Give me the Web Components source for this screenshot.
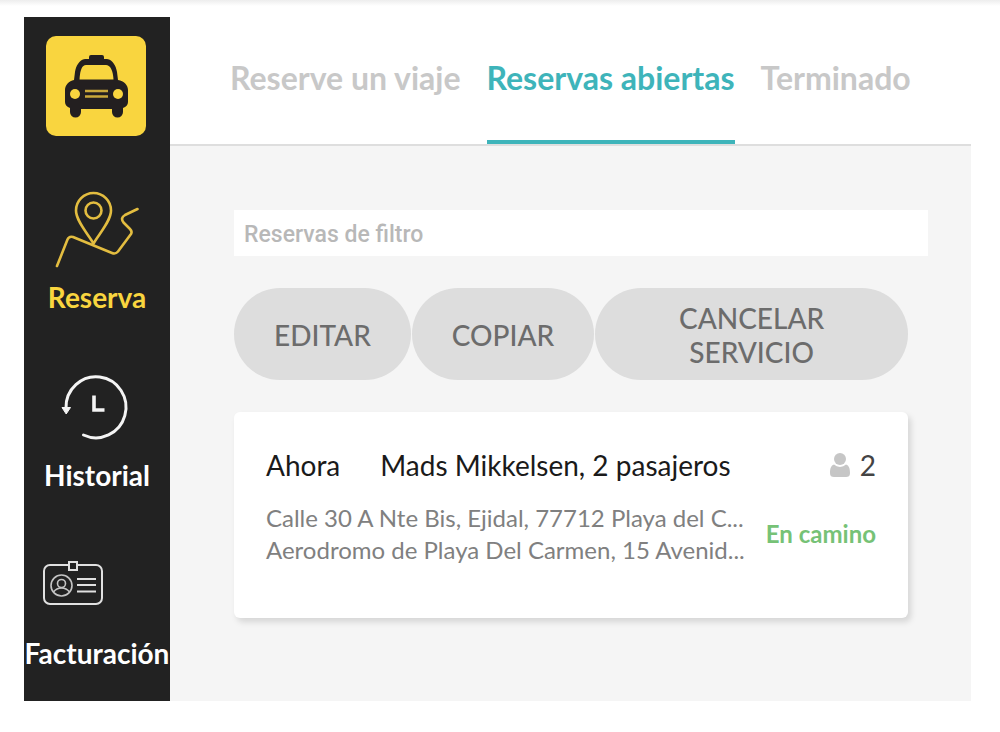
<!DOCTYPE html>
<html lang="es">
<head>
<meta charset="utf-8">
<title>Reservas abiertas</title>
<style>
  body { margin: 0; background: #fff; font-family: Lato, "Open Sans", sans-serif; color: #222; }
</style>
</head>
<body>
<taxi-app>
  <side-bar slot="side">
    <side-item href="#reserva" active>
      <svg slot="icon" viewBox="0 0 146 100" fill="none" stroke="#e3bd40" stroke-width="2.6" stroke-linecap="round" stroke-linejoin="round">
        <path d="M69.500 62.500C64 53 52 40 52 29.500a17.500 17.500 0 0 1 35 0C87 40 75 53 69.500 62.500Z"/>
        <circle cx="69.500" cy="29.500" r="8"/>
        <path d="M33 85L43.500 58.500Q45 55 49 56L88 72Q91.500 73.500 94 70.500L107 53Q108.500 50.500 106 48L99.500 41.500Q96 37 101 34L113.500 28"/>
      </svg>
      Reserva
    </side-item>
    <side-item href="#historial">
      <svg slot="icon" viewBox="0 0 146 100" fill="none" stroke="#f4f4f4" stroke-width="3">
        <path d="M42 49a30 30.500 0 1 1 17.500 27" stroke-linecap="round"/>
        <path d="M38 48.500h8.500l-4.300 6.500z" fill="#f4f4f4" stroke-width="1"/>
        <path d="M70 36.500v14.500h10.500" stroke-width="3.600"/>
      </svg>
      Historial
    </side-item>
    <side-item href="#facturacion">
      <svg slot="icon" viewBox="0 0 146 100" fill="none" stroke="#e0e0e0" stroke-width="2">
        <path d="M44 28H26a6 6 0 0 0-6 6v27a6 6 0 0 0 6 6h46a6 6 0 0 0 6-6V34a6 6 0 0 0-6-6H54"/>
        <rect x="45" y="25" width="8" height="8"/>
        <g stroke-width="1.600" stroke="#c4c4c4"><circle cx="37.500" cy="48.500" r="10.500"/><circle cx="37.500" cy="46.500" r="4"/><path d="M29.500 55q3-4 8-4t8 4"/></g>
        <path d="M53 42h19M53 48h19M53 54.500h19"/>
      </svg>
      Facturación
    </side-item>
  </side-bar>
  <tab-bar slot="tabs">
    <a href="#viaje">Reserve un viaje</a>
    <a href="#abiertas" aria-current="page">Reservas abiertas</a>
    <a href="#terminado">Terminado</a>
  </tab-bar>
  <booking-filter placeholder="Reservas de filtro"></booking-filter>
  <booking-actions>
    <pill-button>EDITAR</pill-button>
    <pill-button>COPIAR</pill-button>
    <pill-button wide>CANCELAR SERVICIO</pill-button>
  </booking-actions>
  <booking-card>
    <span slot="time">Ahora</span>
    <span slot="name">Mads Mikkelsen, 2 pasajeros</span>
    <span slot="count">2</span>
    <span slot="from">Calle 30 A Nte Bis, Ejidal, 77712 Playa del C...</span>
    <span slot="to">Aerodromo de Playa Del Carmen, 15 Avenid...</span>
    <span slot="status">En camino</span>
  </booking-card>
</taxi-app>

<script>
const define = (name, html, setup) => customElements.define(name, class extends HTMLElement {
  constructor() {
    super();
    this.attachShadow({ mode: "open" }).innerHTML = html;
  }
  connectedCallback() { if (setup) setup(this, this.shadowRoot); }
});

define("taxi-app", `
  <style>
    :host { display: block; }
    .edge { height: 6px; background: linear-gradient(#ededed, #fff); }
    .frame { display: grid; grid-template-columns: 146px minmax(0, 1fr); margin: 11px 29px 30px 24px; }
    .page { display: flex; flex-direction: column; background: #f5f5f5; }
    main { display: flex; flex-direction: column; gap: 32px; padding: 64px 43px 64px 64px; }
  </style>
  <div class="edge"></div>
  <div class="frame">
    <slot name="side"></slot>
    <div class="page">
      <slot name="tabs"></slot>
      <main><slot></slot></main>
    </div>
  </div>`);

define("side-bar", `
  <style>
    :host { display: block; background: #222; }
    .logo { display: block; width: 100px; height: 100px; margin-left: 22px; }
    .logo svg { display: block; }
    aside { padding: 19px 0 32px; }
    nav { display: flex; flex-direction: column; gap: 46px; margin-top: 45px; }
  </style>
  <aside>
    <a class="logo" href="#inicio" aria-label="Inicio">
      <svg width="100" height="100" viewBox="0 0 100 100">
        <rect width="100" height="100" rx="10" fill="#f9d53f"/>
        <path d="M45 19h11q2 0 2 2v2h3c6 1 9 7 10 13l1 8c6 1 10 5 10 10v12c0 3-2 5-5 6v4a5.500 5.500 0 0 1-11 0v-3H35v3a5.500 5.500 0 0 1-11 0v-4c-3-1-5-3-5-6V54c0-5 4-9 9-10l1-8c1-6 4-12 10-13h4v-2q0-2 2-2z" fill="#231f20"/>
        <path d="M40 29h20c4 0 7 5 7.500 14.500h-34C34 34 36 29 40 29z" fill="#f9d53f"/>
        <circle cx="29" cy="58" r="5" fill="#f9d53f"/><circle cx="72" cy="58" r="5" fill="#f9d53f"/>
        <path d="M39 55h23M39 60.500h23" stroke="#c9a83a" stroke-width="2.500"/>
      </svg>
    </a>
    <nav><slot></slot></nav>
  </aside>`);

define("side-item", `
  <style>
    :host { display: block; color: #fff; }
    :host([active]) { color: #f9d53f; }
    a { display: flex; flex-direction: column; align-items: center; color: inherit; text-decoration: none;
        font-size: 28px; line-height: 32px; font-weight: 700; white-space: nowrap; }
    ::slotted(svg) { display: block; width: 146px; height: 100px; }
  </style>
  <a><slot name="icon"></slot><span><slot></slot></span></a>`,
  (el, root) => root.querySelector("a").href = el.getAttribute("href"));

define("tab-bar", `
  <style>
    :host { display: block; background: #fff; border-bottom: 2px solid #dedede; }
    nav { display: flex; gap: 26px; padding-left: 60px; }
    ::slotted(a) { padding: 43px 0 44px; border-bottom: 4px solid transparent; color: #c8c8c8;
      font-size: 32px; line-height: 36px; font-weight: 700; text-decoration: none; white-space: nowrap; }
    ::slotted(a[aria-current]) { color: #3eb4ba; border-color: #3eb4ba; }
  </style>
  <nav><slot></slot></nav>`);

define("booking-filter", `
  <style>
    :host { display: block; }
    input { display: block; box-sizing: border-box; width: 100%; height: 46px; padding: 2px 10px 0; border: 0; border-radius: 0;
      background: #fff; font: 500 23px Roboto, sans-serif; color: #444; outline: 0; }
    input::placeholder { color: #b8b8b8; opacity: 1; }
  </style>
  <input type="text">`,
  (el, root) => {
    const input = root.querySelector("input");
    input.placeholder = el.getAttribute("placeholder");
    input.setAttribute("aria-label", input.placeholder);
  });

define("booking-actions", `
  <style>
    :host { display: flex; gap: 1px; margin-right: 20px; }
  </style>
  <slot></slot>`);

define("pill-button", `
  <style>
    :host { display: flex; flex: none; }
    :host([wide]) { flex: 1 1 0; min-width: 0; }
    button { flex: 1; min-height: 92px; padding: 13px 40px 11px; border: 0; border-radius: 46px; background: #ddd; color: #6c6c6c;
      font: 500 28px/34px Lato, sans-serif; }
  </style>
  <button type="button"><slot></slot></button>`);

define("booking-card", `
  <style>
    :host { display: block; margin-right: 20px; }
    article { padding: 36px 32px 52px; border-radius: 6px; background: #fff; box-shadow: 3px 4px 6px rgba(0, 0, 0, .13); }
    header { display: flex; align-items: center; font-size: 28px; line-height: 34px; color: #1a1a1a; white-space: nowrap; }
    .name { margin-left: 40px; }
    .count { display: flex; align-items: center; gap: 10px; margin-left: auto; color: #444; }
    .body { display: flex; align-items: center; justify-content: space-between; margin-top: 20px; line-height: 32px; white-space: nowrap; }
    .route { display: flex; flex-direction: column; min-width: 0; font-size: 24px; color: #808080; }
    .status { font-size: 24px; font-weight: 700; color: #76c276; }
  </style>
  <article>
    <header>
      <slot name="time"></slot>
      <span class="name"><slot name="name"></slot></span>
      <span class="count">
        <svg width="20" height="24" viewBox="0 0 20 24" fill="#c6c6c6" aria-hidden="true">
          <circle cx="10" cy="6" r="6"/>
          <path d="M4 11.500a8.500 8.500 0 0 0 12 0c3 1 4 4 4 8.500 0 3-1.500 4-4 4H4c-2.500 0-4-1-4-4 0-4.500 1-7.500 4-8.500z"/>
        </svg>
        <slot name="count"></slot>
      </span>
    </header>
    <div class="body">
      <div class="route"><slot name="from"></slot><slot name="to"></slot></div>
      <div class="status"><slot name="status"></slot></div>
    </div>
  </article>`);
</script>
</body>
</html>
